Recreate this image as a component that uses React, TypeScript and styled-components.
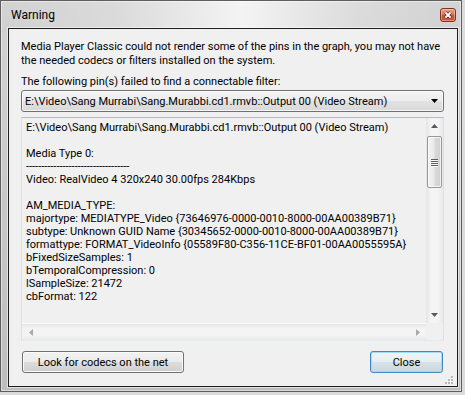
import React from "react";
import styled, { createGlobalStyle, css } from "styled-components";

const Global = createGlobalStyle`
  html, body {
    margin: 0;
    background: #dcdcdc;
  }
  body {
    font-family: Roboto, "Noto Sans", sans-serif;
    font-size: 11px;
    color: #000;
  }
`;

const Window = styled.div`
  box-sizing: border-box;
  width: 462px;
  height: 392px;
  border: 1px solid #5e5e5e;
  padding: 0 3px 4px 7px;
  display: flex;
  flex-direction: column;
  background: linear-gradient(#d3d3d3, #bdbdbd);
  box-shadow: inset 0 0 0 1px rgba(255, 255, 255, 0.45);
`;

const TitleBar = styled.div`
  height: 27px;
  flex: none;
  display: flex;
  align-items: center;
  justify-content: space-between;
  padding: 0 2px 0 3px;
  background: linear-gradient(
    to right,
    rgba(255, 255, 255, 0) 0%,
    rgba(255, 255, 255, 0.2) 25%,
    rgba(255, 255, 255, 0.75) 52%,
    rgba(255, 255, 255, 0.2) 78%,
    rgba(255, 255, 255, 0) 100%
  );
`;

const Title = styled.span`
  font-size: 12px;
  color: #000;
`;

const CloseBox = styled.div`
  box-sizing: border-box;
  width: 16px;
  height: 14px;
  border: 1px solid #7a3325;
  border-radius: 3px;
  display: flex;
  align-items: center;
  justify-content: center;
  background: linear-gradient(#eca48e 0%, #de7458 45%, #cd4c30 55%, #c8563b 100%);
  box-shadow: inset 0 0 0 1px rgba(255, 220, 200, 0.45);
`;

const Client = styled.div`
  flex: 1;
  min-height: 0;
  position: relative;
  display: flex;
  flex-direction: column;
  border: 1px solid #1e1e1e;
  background: #f0f0f0;
  padding: 11px 13px 13px 12px;
  box-shadow: 0 0 0 1px rgba(255, 255, 255, 0.55);
`;

const Message = styled.p`
  margin: 0;
  line-height: 14px;
`;

const Label = styled.div`
  margin-top: 7px;
  line-height: 14px;
`;

const Combo = styled.div`
  margin-top: 1px;
  box-sizing: border-box;
  height: 22px;
  flex: none;
  display: flex;
  align-items: center;
  justify-content: space-between;
  padding: 0 5px 0 3px;
  border: 1px solid #707070;
  border-radius: 3px;
  background: linear-gradient(#f4f4f4 0%, #ececec 50%, #e2e2e2 51%, #d9d9d9 100%);
  box-shadow: inset 0 0 0 1px rgba(255, 255, 255, 0.7);
  white-space: pre;
`;

const EditBox = styled.div`
  margin-top: 5px;
  flex: 1;
  min-height: 0;
  display: grid;
  grid-template-columns: 1fr 17px;
  grid-template-rows: 1fr 17px;
  border: 1px solid;
  border-color: #b5b8bf #dbdfe6 #e3e9ef #dbdfe6;
  background: #f0f0f0;
`;

const EditText = styled.div`
  padding: 3px 4px;
  line-height: 13px;
  white-space: pre;
  overflow: hidden;
`;

const VScroll = styled.div`
  display: flex;
  flex-direction: column;
  background: linear-gradient(to right, #e6e6e6, #f4f4f4 30%, #f4f4f4 70%, #e9e9e9);
`;

const HScroll = styled.div`
  display: flex;
  justify-content: space-between;
  background: linear-gradient(#e6e6e6, #f4f4f4 30%, #f4f4f4 70%, #e9e9e9);
  border-top: 1px solid #fbfbfb;
  box-sizing: border-box;
`;

const Corner = styled.div`
  background: #f0f0f0;
`;

const ArrowCell = styled.div<{ $end?: boolean }>`
  width: 17px;
  height: 16px;
  flex: none;
  display: flex;
  align-items: center;
  justify-content: center;
  ${(p) =>
    p.$end &&
    css`
      margin-top: auto;
    `}
`;

const Thumb = styled.div`
  margin: 2px 1px 0;
  height: 52px;
  box-sizing: border-box;
  border: 1px solid #979797;
  border-radius: 2px;
  display: flex;
  flex-direction: column;
  align-items: center;
  justify-content: center;
  gap: 1px;
  background: linear-gradient(to right, #f3f3f3 0%, #e9e9e9 45%, #d9d9d9 55%, #d0d0d0 100%);
  box-shadow: inset 0 0 0 1px rgba(255, 255, 255, 0.75);
`;

const GripLine = styled.div`
  width: 7px;
  height: 1px;
  background: #5e5e5e;
  box-shadow: 0 1px 0 #f6f6f6;
`;

const ButtonRow = styled.div`
  margin-top: 10px;
  padding: 0 1px;
  display: flex;
  justify-content: space-between;
`;

const Button = styled.button<{ $default?: boolean; $w: number }>`
  box-sizing: border-box;
  width: ${(p) => p.$w}px;
  height: 22px;
  padding: 0;
  font: inherit;
  color: #000;
  border: 1px solid #707070;
  border-radius: 3px;
  background: linear-gradient(#f2f2f2 0%, #ebebeb 50%, #dddddd 51%, #cfcfcf 100%);
  box-shadow: inset 0 0 0 1px #fbfbfb;
  ${(p) =>
    p.$default &&
    css`
      border-color: #3c8ac4;
      box-shadow: inset 0 0 0 1px #9fdcf8;
      background: linear-gradient(#eff5f8 0%, #e6eef2 50%, #d8e2e8 51%, #cad6de 100%);
    `}
`;

const SizeGrip = styled.svg`
  position: absolute;
  right: 4px;
  bottom: 2px;
`;

const Tri = ({ dir, color }: { dir: "up" | "down" | "left" | "right"; color: string }) => {
  const pts = {
    up: "3.5,0 7,4 0,4",
    down: "0,0 7,0 3.5,4",
    left: "4,0 4,7 0,3.5",
    right: "0,0 4,3.5 0,7",
  }[dir];
  const vertical = dir === "up" || dir === "down";
  return (
    <svg width={vertical ? 7 : 4} height={vertical ? 4 : 7}>
      <polygon points={pts} fill={color} />
    </svg>
  );
};

const lines = [
  "E:\\Video\\Sang Murrabi\\Sang.Murabbi.cd1.rmvb::Output 00 (Video Stream)",
  "",
  "Media Type 0:",
  "----------------------------------",
  "Video: RealVideo 4 320x240 30.00fps 284Kbps",
  "",
  "AM_MEDIA_TYPE:",
  "majortype: MEDIATYPE_Video {73646976-0000-0010-8000-00AA00389B71}",
  "subtype: Unknown GUID Name {30345652-0000-0010-8000-00AA00389B71}",
  "formattype: FORMAT_VideoInfo {05589F80-C356-11CE-BF01-00AA0055595A}",
  "bFixedSizeSamples: 1",
  "bTemporalCompression: 0",
  "lSampleSize: 21472",
  "cbFormat: 122",
];

const gripDots = [
  [6, 0],
  [3, 3],
  [6, 3],
  [0, 6],
  [3, 6],
  [6, 6],
];

export default function App() {
  return (
    <>
      <Global />
      <Window>
        <TitleBar>
          <Title>Warning</Title>
          <CloseBox>
            <svg width="8" height="8" viewBox="0 0 8 8">
              <path d="M1.5 1.5 L6.5 6.5 M6.5 1.5 L1.5 6.5" stroke="#4a2a24" strokeWidth="3.2" />
              <path d="M1.5 1.5 L6.5 6.5 M6.5 1.5 L1.5 6.5" stroke="#ffffff" strokeWidth="1.8" />
            </svg>
          </CloseBox>
        </TitleBar>
        <Client>
          <Message>
            Media Player Classic could not render some of the pins in the graph, you may not have
            <br />
            the needed codecs or filters installed on the system.
          </Message>
          <Label>The following pin(s) failed to find a connectable filter:</Label>
          <Combo>
            <span>{lines[0]}</span>
            <Tri dir="down" color="#000" />
          </Combo>
          <EditBox>
            <EditText>
              {lines.map((l, i) => (
                <div key={i}>{l || " "}</div>
              ))}
            </EditText>
            <VScroll>
              <ArrowCell>
                <Tri dir="up" color="#5a5a5a" />
              </ArrowCell>
              <Thumb>
                <GripLine />
                <GripLine />
                <GripLine />
                <GripLine />
              </Thumb>
              <ArrowCell $end>
                <Tri dir="down" color="#5a5a5a" />
              </ArrowCell>
            </VScroll>
            <HScroll>
              <ArrowCell>
                <Tri dir="left" color="#a8a8a8" />
              </ArrowCell>
              <ArrowCell>
                <Tri dir="right" color="#a8a8a8" />
              </ArrowCell>
            </HScroll>
            <Corner />
          </EditBox>
          <ButtonRow>
            <Button $w={162}>Look for codecs on the net</Button>
            <Button $w={73} $default>
              Close
            </Button>
          </ButtonRow>
          <SizeGrip width="8" height="8">
            {gripDots.map(([x, y], i) => (
              <g key={i}>
                <rect x={x + 1} y={y + 1} width="2" height="2" fill="#ffffff" />
                <rect x={x} y={y} width="2" height="2" fill="#b8b8b8" />
              </g>
            ))}
          </SizeGrip>
        </Client>
      </Window>
    </>
  );
}
